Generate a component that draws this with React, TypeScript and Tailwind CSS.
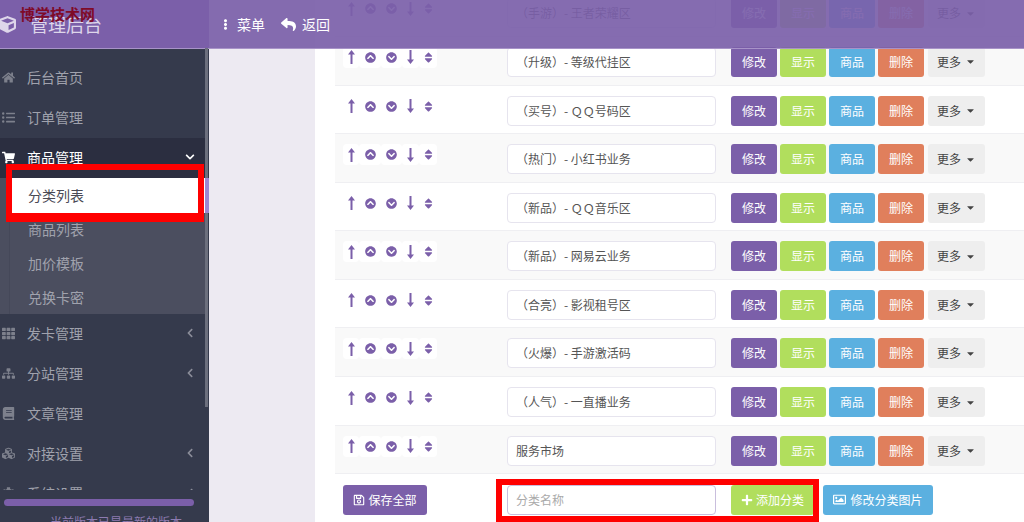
import type { ReactNode } from "react";
import { FaChevronCircleUp, FaChevronCircleDown, FaSort, FaHome, FaListUl, FaShoppingCart, FaTh, FaSitemap, FaBook, FaCubes, FaCube, FaCog, FaEllipsisV, FaReply, FaRegSave, FaPlus, FaRegImage, FaChevronDown, FaChevronLeft, FaCaretDown } from "react-icons/fa";

const font = "font-['Noto_Sans_CJK_SC','Liberation_Sans',sans-serif]";

const rows = [
  "（手游）- 王者荣耀区",
  "（升级）- 等级代挂区",
  "（买号）- ＱＱ号码区",
  "（热门）- 小红书业务",
  "（新品）- ＱＱ音乐区",
  "（新品）- 网易云业务",
  "（合亮）- 影视租号区",
  "（火爆）- 手游激活码",
  "（人气）- 一直播业务",
  "服务市场",
];

function ArrowUp() {
  return (
    <svg width="7" height="14" viewBox="0 0 7 14" fill="currentColor">
      <path d="M3.5 0 L7 4.5 H4.5 V14 H2.5 V4.5 H0 Z" />
    </svg>
  );
}

function ArrowDown() {
  return (
    <svg width="7" height="14" viewBox="0 0 7 14" fill="currentColor">
      <path d="M3.5 14 L7 9.5 H4.5 V0 H2.5 V9.5 H0 Z" />
    </svg>
  );
}

function NavItem({ icon, label, arrow, active }: { icon: ReactNode; label: string; arrow?: "left" | "down"; active?: boolean }) {
  return (
    <div className={`flex h-10 shrink-0 items-center pb-[2px] pl-[2px] pr-[10px] text-sm ${active ? "bg-[#2b2e40] text-white" : "text-[#a0a2ad]"}`}>
      <span className={`flex w-[25px] shrink-0 text-[13px] ${active ? "text-white" : "text-[#7d808c]"}`}>{icon}</span>
      <span className="flex-1">{label}</span>
      {arrow === "left" && <FaChevronLeft className="text-[10px] text-[#8b8d99]" />}
      {arrow === "down" && <FaChevronDown className="text-[10px] text-white" />}
    </div>
  );
}

function Sidebar() {
  return (
    <aside className="flex h-[522px] w-[209px] shrink-0 flex-col overflow-hidden bg-[#353a4c] pt-[58px]">
      <div className="flex h-[432px] shrink-0 flex-col overflow-hidden pr-[4px]">
        <NavItem icon={<FaHome />} label="后台首页" />
        <NavItem icon={<FaListUl />} label="订单管理" />
        <NavItem icon={<FaShoppingCart />} label="商品管理" arrow="down" active />
        <div className="shrink-0 bg-[#4b4e5f] pl-[9px] text-sm text-[#a0a2ad]">
          <div className="flex flex-col border-l border-[#454859]">
            <div className="flex h-[35px] items-center bg-white pb-[2px] pl-[18px] text-[#4a4a55]">分类列表</div>
            <div className="flex h-[34px] items-center pb-[2px] pl-[18px]">商品列表</div>
            <div className="flex h-[34px] items-center pb-[2px] pl-[18px]">加价模板</div>
            <div className="flex h-[33px] items-center pb-[1px] pl-[18px]">兑换卡密</div>
          </div>
        </div>
        <NavItem icon={<FaTh />} label="发卡管理" arrow="left" />
        <NavItem icon={<FaSitemap />} label="分站管理" arrow="left" />
        <NavItem icon={<FaBook />} label="文章管理" />
        <NavItem icon={<FaCubes />} label="对接设置" arrow="left" />
        <NavItem icon={<FaCog />} label="系统设置" arrow="left" />
      </div>
      <div className="mx-[4px] mt-[9px] h-[7px] w-[190px] shrink-0 rounded-full bg-[#7b5fa9]" />
      <div className="mt-[8px] shrink-0 pl-[50px] text-xs whitespace-nowrap text-[#8d7bb0]">当前版本已是最新的版本</div>
    </aside>
  );
}

function IconPad({ w, children }: { w: string; children: ReactNode }) {
  return <span className={`flex h-[21px] items-center justify-center rounded-[4px] bg-white text-[#7b5fa9] ${w}`}>{children}</span>;
}

function Btn({ color, children }: { color: string; children: ReactNode }) {
  return <span className={`flex h-[30px] w-[46px] items-center justify-center rounded-[3px] text-xs text-white ${color}`}>{children}</span>;
}

function Row({ text, odd }: { text: string; odd: boolean }) {
  return (
    <div className={`flex h-[48.6px] border-b border-[#efeff2] pt-[10px] ${odd ? "bg-[#f9f9f9]" : "bg-white"}`}>
      <div className="ml-[8px] flex w-[164px] items-start">
        <IconPad w="w-[16px]"><ArrowUp /></IconPad>
        <IconPad w="w-[22px]"><FaChevronCircleUp className="text-[11px]" /></IconPad>
        <IconPad w="w-[21px]"><FaChevronCircleDown className="text-[11px]" /></IconPad>
        <IconPad w="w-[17px]"><ArrowDown /></IconPad>
        <IconPad w="w-[18px]"><FaSort className="text-[13px]" /></IconPad>
      </div>
      <div className="flex h-[30px] w-[209px] items-center rounded-[4px] border border-[#e6e4ee] bg-white pl-[8px] text-xs text-[#555]">{text}</div>
      <div className="ml-[15px] flex gap-[3px]">
        <Btn color="bg-[#7b5fa9]">修改</Btn>
        <Btn color="bg-[#b1de5d]">显示</Btn>
        <Btn color="bg-[#5bb0e0]">商品</Btn>
        <Btn color="bg-[#e07f5c]">删除</Btn>
        <span className="ml-[1px] flex h-[30px] w-[57px] items-center justify-center gap-[4px] rounded-[3px] bg-[#eeeeee] text-xs text-[#444]">更多<FaCaretDown className="text-[11px]" /></span>
      </div>
    </div>
  );
}

function Main() {
  return (
    <main className="flex min-w-0 flex-1 bg-[#edeaf2] pl-[106px]">
      <div className="flex-1 bg-white pl-[20px]">
        <div className="-mt-[11.7px]">
          {rows.map((r, i) => (
            <Row key={i} text={r} odd={i % 2 === 1} />
          ))}
        </div>
        <div className="ml-[8px] flex pt-[10.3px] text-xs text-white">
          <span className="flex h-[30px] w-[84px] items-center justify-center gap-[3px] rounded-[3px] bg-[#7b5fa9]"><FaRegSave className="text-[12px]" />保存全部</span>
          <input readOnly placeholder="分类名称" className="ml-[80px] h-[30px] w-[209px] rounded-[4px] border border-[#c9bedd] bg-white pl-[8px] text-xs outline-none placeholder:text-[#aaa]" />
          <span className="ml-[15px] flex h-[30px] w-[83px] items-center justify-center gap-[3px] rounded-[3px] bg-[#b1de5d]"><FaPlus className="text-[12px]" />添加分类</span>
          <span className="ml-[9px] flex h-[30px] w-[110px] items-center justify-center gap-[4px] rounded-[3px] bg-[#5bb0e0]"><FaRegImage className="text-[13px]" />修改分类图片</span>
        </div>
      </div>
    </main>
  );
}

function Header() {
  return (
    <header className="absolute top-0 left-0 flex h-[49px] w-[1024px] border-b border-[#a893c8] text-white">
      <div className="flex w-[209px] items-center bg-[#7b5fa9] text-[18px] text-[#ded6ea]">
        <FaCube className="mr-[14px] -ml-[1px] text-[17px]" />
        管理后台
      </div>
      <div className="flex flex-1 items-center gap-[16px] bg-[#7b5fa9]/92 pl-[11px] text-sm">
        <span className="flex items-center gap-[6px]"><FaEllipsisV className="text-[11px]" />菜单</span>
        <span className="flex items-center gap-[6px]"><FaReply className="text-[15px]" />返回</span>
      </div>
    </header>
  );
}

export default function App() {
  return (
    <div className={`relative flex h-[522px] w-[1024px] overflow-hidden ${font}`}>
      <Sidebar />
      <Main />
      <Header />
      <span className="absolute top-[3px] left-[20px] text-[15px] font-bold whitespace-nowrap text-[#7f0a28]">博学技术网</span>
      <span className="absolute top-[48px] left-[205px] h-[359px] w-[3px] bg-[#6c6f7d]" />
      <span className="absolute top-[178px] left-[205px] h-[35px] w-[4px] bg-[#9d86d0]" />
      <span className="absolute top-[164px] left-[6px] h-[58px] w-[198px] border-x-[6px] border-t-[6px] border-b-[9px] border-[#ff0000]" />
      <span className="absolute top-[479px] left-[496px] h-[43px] w-[323px] border-[6px] border-[#ff0000]" />
    </div>
  );
}
